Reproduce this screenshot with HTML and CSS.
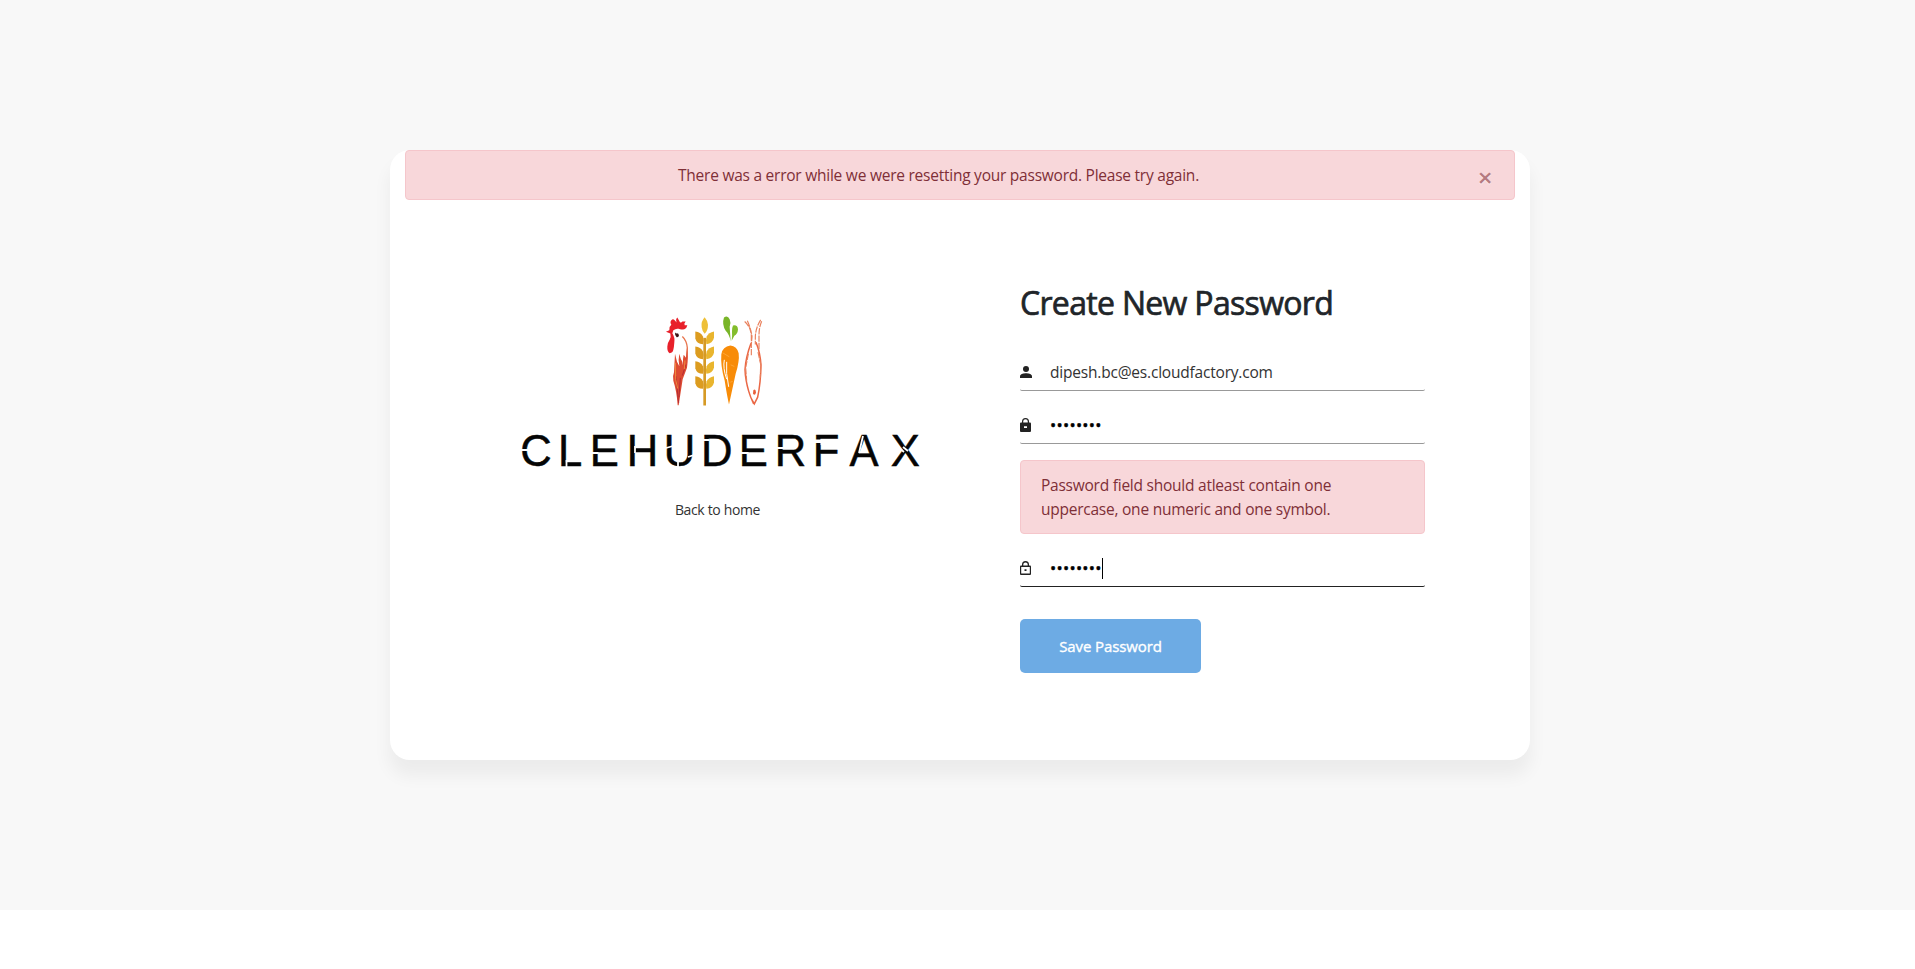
FILE: index.html
```html
<!DOCTYPE html>
<html lang="en">
<head>
<meta charset="utf-8">
<title>Create New Password</title>
<link rel="stylesheet" href="styles.css">
</head>
<body>
<main class="page">
  <section class="card">
    <div class="alert alert-top">
      <span class="alert-text">There was a error while we were resetting your password. Please try again.</span>
      <span class="close">×</span>
    </div>
    <div class="content">
      <div class="brand">
        <svg class="logo" viewBox="510 305 420 175" width="420" height="175">
          <g transform="translate(650 304.500) scale(.33333)">
            <!-- rooster -->
            <path fill="#e8202a" d="M48 82L58 77Q57 66 64 61Q59 52 64 47Q69 42 74 47L80 54Q76 44 82 39L90 53Q94 56 97 51L107 51Q101 57 104 62L112 62Q110 72 103 74Q92 76 86 73Q78 71 70 77L67 86Q75 98 73 113Q72 128 70 136Q68 146 59 146Q51 141 52 126Q53 114 59 106Q64 98 61 87Z"/>
            <path fill="#3c1518" d="M75 84Q79 88 84 86L87 92Q86 99 80 98Q74 94 75 84Z"/>
            <path fill="none" stroke="#e8754d" stroke-width="4" d="M97 96Q110 108 112 130L110 165"/>
            <path fill="#dd4b32" d="M111 130Q116 155 111 190L98 224L86 302L83 302Q80 260 70 229Q67 214 72 203L75 148L81 172L88 185Q84 165 88 148Q92 165 97 172L99 182Q98 162 101 151L108 160Z"/>
            <path fill="none" stroke="#b52b35" stroke-width="3" d="M108 180L97 213M78 215L83 269L86 295M91 220L87 278"/>
            <path fill="none" stroke="#f18b3d" stroke-width="3" d="M76 175L77 225L83 252M105 168L103 194"/>
            <!-- wheat -->
            <path fill="#d69a25" d="M160 100H168V303H160Z"/>
            <path fill="#eec038" d="M164 38Q152 51 155 68Q157 81 164 88Q174 79 174 61Q173 48 164 38Z"/>
            <g id="grain">
              <path fill="#dc9c1f" d="M136 81Q152 82 159 96Q163 108 159 119Q140 119 136 102Z"/>
              <path fill="#e9b52e" d="M192 81Q176 84 170 96Q166 107 169 119Q188 118 192 100Z"/>
            </g>
            <use href="#grain" y="45"/>
            <use href="#grain" y="89"/>
            <use href="#grain" y="134"/>
            <!-- carrot -->
            <path fill="#79b529" d="M222 39Q233 31 239 44Q244 56 239 67L242 110Q237 88 227 79Q215 59 222 39Z"/>
            <path fill="#83bd2b" d="M249 63Q263 60 264 75Q263 88 253 94L245 109Q247 92 246 80Q246 69 249 63Z"/>
            <path fill="#f88c08" d="M241 123Q261 125 266 146Q269 170 257 208L237 300Q231 274 224 228Q211 183 214 149Q218 126 241 123Z"/>
            <path fill="none" stroke="#fff" stroke-width="3" d="M223 166Q218 190 230 224M230 172L230 207L236 247"/>
            <path fill="none" stroke="#ffb04b" stroke-width="2" d="M218 145L238 157M242 181L253 186M241 233L248 231"/>
            <!-- fish -->
            <path fill="none" stroke="#ea6745" stroke-width="4.5" d="M303 116Q287 159 285 195Q286 225 296 260Q301 278 311 298M318 113Q331 145 333 182Q332 235 323 278L313 298L304 282"/>
            <path fill="none" stroke="#e9805c" stroke-width="3.5" stroke-dasharray="19 3" d="M284 51Q302 67 304 93L304 154M292 49Q303 73 306 96L304 120M332 46Q317 70 316 96L316 120M335 50Q327 69 327 92L327 138M295 148L287 190L290 229M324 143L332 179L331 220"/>
            <path fill="#e8603b" d="M310 257Q317 251 318 264Q315 275 309 268Z"/>
          </g>
          <text class="wordmark" y="465.7" x="520.3 558 589.8 626.8 663.8 701 738.8 774.8 812.8 849.5 890.7">CLEHUDERFAX</text>
          <!-- stencil breaks in the lettering -->
          <path class="cuts" d="M520 450H529M566.500 460V468M591 453H598.500M635 446V453M666 448L673 446M678 460V469M688 457L694 455M702 440H709.500M740 453H748.500M776 448H784.500M815 440.500H821M821.500 439V445M815 442H821M863 436L859 453M897 446L904 452M903 447L908 451"/>
        </svg>
        <a class="back">Back to home</a>
      </div>
      <form class="form">
        <h1 class="title">Create New Password</h1>
        <div class="field">
          <svg class="icon" viewBox="0 0 12 14" width="12" height="14"><circle cx="6" cy="4" r="3"/><path d="M0 13V11.3C0 9 3.5 8.2 6 8.2s6 .8 6 3.1V13z"/></svg>
          <span class="value email">dipesh.bc@es.cloudfactory.com</span>
        </div>
        <div class="field second">
          <svg class="icon" viewBox="0 0 12 14" width="12" height="14"><path fill-rule="evenodd" d="M1.3 4.500H2V3.600a3.500 3.500 0 0 1 7 0v.9h.7c.8 0 1.3.5 1.3 1.3v6.900c0 .8-.5 1.3-1.3 1.3H1.3C.5 14 0 13.500 0 12.700V5.800c0-.8.5-1.3 1.3-1.3zM3.200 4.500h4.600v-.9a2.300 2.300 0 0 0-4.600 0zM4 8.200v1.800h3V8.200z"/></svg>
          <span class="value dots">••••••••</span>
        </div>
        <div class="alert alert-field">Password field should atleast contain one<br>uppercase, one numeric and one symbol.</div>
        <div class="field third">
          <svg class="icon" viewBox="0 0 12 14" width="12" height="14"><path fill-rule="evenodd" d="M1.3 4.500H2V3.600a3.500 3.500 0 0 1 7 0v.9h.7c.8 0 1.3.5 1.3 1.3v6.900c0 .8-.5 1.3-1.3 1.3H1.3C.5 14 0 13.500 0 12.700V5.800c0-.8.5-1.3 1.3-1.3zM3.300 4.500h4.400v-.9a2.200 2.200 0 0 0-4.400 0zM1.200 6v6.500h8.600V6zM4.500 8.200v1.800h2V8.200z"/></svg>
          <span class="value dots">••••••••</span><span class="caret"></span>
        </div>
        <button class="save" type="button">Save Password</button>
      </form>
    </div>
  </section>
</main>
</body>
</html>
```
FILE: styles.css
```css
* { box-sizing: border-box; }
body {
  margin: 0;
  background: #fff;
  color: #222;
  font-family: "Open Sans", "Noto Sans", sans-serif;
  font-size: 16px;
  line-height: 24px;
}
.page {
  height: 910px;
  padding: 150px 385px 150px 390px;
  background: #f8f8f8;
}
.card {
  width: 1140px;
  height: 610px;
  padding: 0 15px;
  border-radius: 20px;
  background: #fff;
  box-shadow: 0 15px 16.83px .17px rgba(0, 0, 0, .05);
}
.alert {
  border: 1px solid #f5c6cb;
  border-radius: 4px;
  background: #f8d7da;
  color: #7f2f37;
  font-size: 15.5px;
  letter-spacing: -.24px;
}
.alert-top {
  display: flex;
  align-items: center;
  height: 50px;
  padding: 0 19px 0 20px;
}
.alert-text { flex: 1; padding-right: 24px; text-align: center; }
.close {
  width: 20px;
  margin-top: 4px;
  text-align: center;
  font-size: 26px;
  font-weight: 600;
  opacity: .55;
  text-shadow: 0 1px 0 #fff;
}
.content { display: flex; }
.brand {
  display: flex;
  flex-direction: column;
  align-items: center;
  width: 420px;
  margin: 105px 90px 0 105px;
}
.logo { display: block; }
.wordmark {
  font-family: "Liberation Sans", Arial, sans-serif;
  font-size: 43.6px;
  fill: #050505;
  stroke: #050505;
  stroke-width: .5px;
}
.cuts { fill: none; stroke: #fff; stroke-width: 1.8px; }
.back {
  margin-top: 18px;
  padding-right: 5px;
  font-size: 14px;
  letter-spacing: -.35px;
  color: #333;
}
.form {
  width: 405px;
  padding-top: 84px;
}
.title {
  margin: 0;
  font-size: 32px;
  font-weight: 400;
  line-height: 38px;
  letter-spacing: -.68px;
  white-space: nowrap;
  color: #212529;
  -webkit-text-stroke: .7px #212529;
}
.field {
  display: flex;
  align-items: center;
  height: 37px;
  margin-top: 32px;
  border-bottom: 1px solid #999;
  border-radius: 2px;
}
.second { margin-top: 16px; }
.third { margin-top: 16px; border-color: #222; }
.icon { fill: #222; }
.value { margin-left: 18px; color: #333; font-size: 15.5px; letter-spacing: -.2px; }
.dots { color: #000; font-size: 16.5px; letter-spacing: .27px; -webkit-text-stroke: .4px #000; }
.caret { width: 1px; height: 21px; background: #000; }
.alert-field {
  height: 74px;
  margin-top: 16px;
  padding: 12px 20px;
}
.save {
  width: 181px;
  height: 54px;
  margin-top: 32px;
  border: 0;
  border-radius: 5px;
  background: #6dabe4;
  color: #fff;
  font: 400 15px "Open Sans", sans-serif;
  letter-spacing: -.1px;
  -webkit-text-stroke: .35px #fff;
}
```
